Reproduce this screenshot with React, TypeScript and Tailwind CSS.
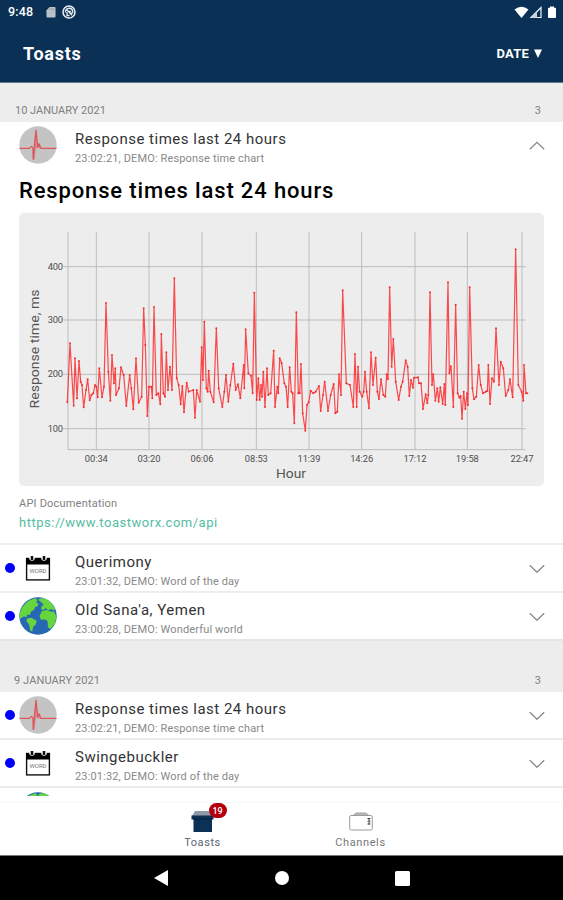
type ToastKind = "pulse" | "word" | "earth";

type Toast = {
  kind: ToastKind;
  meta: string;
  title: string;
};

const SERIES =
  "157,592 165,415 176,602 180,460 186,580 192,468 197,530 201,540 206,607 213,555 218,523 224,586 229,570 235,565 240,540 244,545 248,577 253,490 261,577 267,545 273,294 280,500 286,587 291,450 297,535 301,490 303,570 312,550 318,487 326,510 334,603 344,510 349,550 355,613 363,460 371,593 380,575 386,310 391,420 397,633 402,545 409,545 412,580 417,306 424,570 430,565 436,598 439,387 445,565 450,575 454,442 459,555 465,485 471,555 478,220 485,520 491,540 497,598 502,543 507,622 515,533 521,560 535,555 540,638 545,555 555,590 560,427 564,525 568,350 574,550 578,560 581,497 586,560 596,592 604,370 611,550 622,606 628,560 633,510 640,590 646,540 655,476 662,555 669,538 676,580 686,480 688,550 692,373 700,505 708,512 713,565 718,263 725,585 730,520 734,585 738,540 741,575 745,500 750,606 756,490 760,570 767,565 776,437 780,606 787,545 790,565 794,460 800,475 808,535 813,545 818,606 824,487 829,560 833,565 838,655 844,322 850,565 854,565 858,477 863,625 871,677 876,600 881,592 887,557 895,565 902,560 912,543 917,618 924,570 929,530 939,618 947,570 956,537 961,625 967,620 972,508 978,570 983,256 994,535 1005,540 1015,606 1020,447 1025,606 1029,485 1034,560 1042,575 1046,560 1050,500 1055,560 1062,610 1068,442 1074,540 1082,458 1087,560 1092,582 1098,523 1105,570 1111,575 1115,508 1119,522 1124,247 1130,485 1135,402 1142,530 1151,585 1158,545 1163,530 1172,466 1178,485 1183,573 1188,525 1194,548 1197,518 1209,517 1212,535 1218,535 1224,612 1232,568 1237,595 1240,570 1245,262 1251,540 1255,508 1261,587 1267,550 1271,590 1276,547 1283,597 1288,537 1291,600 1299,232 1303,505 1308,484 1315,606 1322,299 1328,565 1333,578 1337,573 1341,641 1346,560 1351,612 1356,565 1359,600 1364,247 1372,550 1377,583 1384,575 1391,480 1397,540 1404,565 1412,560 1417,558 1420,480 1425,597 1431,520 1437,530 1443,370 1452,540 1457,470 1465,490 1472,573 1480,555 1485,523 1493,577 1502,133 1510,540 1520,560 1525,587 1527,480 1533,565 1537,565";

const POINTS = SERIES.split(" ").map((pair) => pair.split(",").map(Number));

const X_TICKS = [
  { x: 244, label: "00:34" },
  { x: 402, label: "03:20" },
  { x: 561, label: "06:06" },
  { x: 724, label: "08:53" },
  { x: 882, label: "11:39" },
  { x: 1040, label: "14:26" },
  { x: 1200, label: "17:12" },
  { x: 1357, label: "19:58" },
  { x: 1521, label: "22:47" },
];

const Y_TICKS = [
  { y: 185, label: "400" },
  { y: 345, label: "300" },
  { y: 508, label: "200" },
  { y: 671, label: "100" },
];

const RESPONSE: Toast = {
  kind: "pulse",
  title: "Response times last 24 hours",
  meta: "23:02:21, DEMO: Response time chart",
};

const FIRST_DAY: Toast[] = [
  { kind: "word", title: "Querimony", meta: "23:01:32, DEMO: Word of the day" },
  { kind: "earth", title: "Old Sana'a, Yemen", meta: "23:00:28, DEMO: Wonderful world" },
];

const SECOND_DAY: Toast[] = [
  RESPONSE,
  { kind: "word", title: "Swingebuckler", meta: "23:01:32, DEMO: Word of the day" },
];

function PulseIcon() {
  return (
    <svg className="size-[38px]" viewBox="0 0 38 38">
      <circle cx="19" cy="19" r="18.7" fill="#c4c4c4" />
      <path
        d="M.5 22.300H10.500l2-2 1.300 1.500.6 11.500 2.600-29.300L18.800 21l1.200-3 1.800 4.300h15.700"
        fill="none"
        stroke="#dd5559"
        strokeWidth="1.2"
        strokeLinejoin="round"
      />
      <path d="m13.400 33.500 1-12 1.800-15 1.300-2 .8 13.500 2.500-1 1.600 5.300h-5.600l-1.300 11.200Z" fill="#dd5559" opacity=".5" />
    </svg>
  );
}

function WordIcon() {
  return (
    <svg className="size-[38px]" viewBox="0 0 38 38">
      <rect x="7.6" y="9.5" width="22.8" height="21.4" fill="#fff" stroke="#111" strokeWidth="1.4" />
      <path d="M7 9h24v6.500H7z" fill="#000" />
      <circle cx="13" cy="9" r="2.8" fill="#fff" />
      <circle cx="25" cy="9" r="2.8" fill="#fff" />
      <path d="M11.700 7h2.600v4h-2.600zM23.700 7h2.600v4h-2.600z" fill="#111" />
      <text x="19" y="24.2" textAnchor="middle" fontSize="6" fill="#777" textLength="17">
        WORD
      </text>
    </svg>
  );
}

function EarthIcon() {
  return (
    <svg className="size-[38px]" viewBox="0 0 38 38">
      <circle cx="19" cy="19" r="18.7" fill="#2767b4" />
      <g fill="#66d63e">
        <path d="M10 3.500 16.500 1l2 2.500-1.500 2 2.500 1-1 3-2.500.5-1 3-2.800 1.500-1.500 3.500-2.500-.5-.7 2.500-3-.5L1 22 .3 17 3 10.500l4-4.500Z" />
        <path d="m8 21.500 4.500-.8 5.300 3.300-1.300 3.700-2.500 2.300-.7 4.500-2-1-1.300-6.500-2.500-2.500Z" />
        <path d="m19 2.500 4-1.500 5 1.600 5 4 3 5-1 2-3-1.500-2.500 1.500-3-2.500-2 2-2.500-.8.5-3.300 2.500-1-2.500-2.500Z" />
        <path d="m23 14 5-1 3 1.500h4l2.500 5-1.500 7-4.500 5.500-2.500-1.500-.5-6.500-2.500-1.500-4 .3L20.500 19Z" />
      </g>
    </svg>
  );
}

function ToastIcon({ kind }: { kind: ToastKind }) {
  if (kind === "pulse") return <PulseIcon />;
  if (kind === "word") return <WordIcon />;
  return <EarthIcon />;
}

function Chevron({ up = false }: { up?: boolean }) {
  return (
    <svg className="h-[9px] w-4" viewBox="0 0 16 9">
      <path
        d={up ? "M.8 8.300 8 1.300 15.200 8.300" : "M.8 1.300 8 8.300 15.200 1.300"}
        fill="none"
        stroke="#858585"
        strokeWidth="1.2"
      />
    </svg>
  );
}

function ToastRow({ toast, open = false }: { toast: Toast; open?: boolean }) {
  return (
    <div className="flex h-[46px] shrink-0 items-center bg-white pr-[18px] pl-[5px]">
      <span className={open ? "size-[10px]" : "size-[10px] rounded-full bg-[#0000fa]"} />
      <span className="ml-1">
        <ToastIcon kind={toast.kind} />
      </span>
      <div className="ml-[18px] flex-1 pt-[7px] whitespace-nowrap">
        <div className="text-[15px] leading-[19px] tracking-[0.5px] text-[#333]">{toast.title}</div>
        <div className="mt-px text-[11px] leading-[17px] tracking-[0.14px] text-[#888]">{toast.meta}</div>
      </div>
      <Chevron up={open} />
    </div>
  );
}

function SectionHeader({ date, className }: { date: string; className: string }) {
  return (
    <div
      className={`flex shrink-0 items-end justify-between bg-[#ededed] pr-[22px] text-[11px] leading-[14px] text-[#808080] ${className}`}
    >
      <span>{date}</span>
      <span>3</span>
    </div>
  );
}

function ResponseChart() {
  return (
    <svg className="block h-[273px] w-[525px] rounded-[5px] bg-[#ededed]" viewBox="12 24 1575 819">
      <g stroke="#bdbdbd" strokeWidth="3">
        <path d="M159 81V734" />
        {X_TICKS.map((tick) => (
          <path key={tick.label} d={`M${tick.x} 81V734`} />
        ))}
        {Y_TICKS.map((tick) => (
          <path key={tick.label} d={`M144 ${tick.y}H1532`} />
        ))}
        <path d="M159 734H1532" />
      </g>
      <polyline points={SERIES} fill="none" stroke="#fb2a2e" strokeWidth="3.6" strokeLinejoin="round" opacity=".85" />
      <g fill="#f5161b" opacity=".75">
        {POINTS.map(([x, y]) => (
          <circle key={x} cx={x} cy={y} r="3" />
        ))}
      </g>
      <g fill="#4d4d4d" fontSize="28">
        {X_TICKS.map((tick) => (
          <text key={tick.label} x={tick.x} y="771" textAnchor="middle" textLength="69">
            {tick.label}
          </text>
        ))}
        {Y_TICKS.map((tick) => (
          <text key={tick.label} x="144" y={tick.y + 9} textAnchor="end" textLength="46">
            {tick.label}
          </text>
        ))}
      </g>
      <text x="828" y="819" textAnchor="middle" fontSize="39" textLength="90" lengthAdjust="spacingAndGlyphs" fill="#555">
        Hour
      </text>
      <text
        transform="translate(72 432) rotate(-90)"
        textAnchor="middle"
        fontSize="38"
        textLength="357"
        lengthAdjust="spacingAndGlyphs"
        fill="#555"
      >
        Response time, ms
      </text>
    </svg>
  );
}

function StatusBar() {
  return (
    <div className="flex h-6 items-center pr-[6px] pl-2 text-white">
      <span className="w-[27px] text-[12.5px] leading-4 font-medium tracking-[0.2px]">9:48</span>
      <svg className="ml-[11px] h-3 w-[10px]" viewBox="0 0 11 12">
        <path d="M4 .5h5.500q1 0 1 1V11q0 1-1 1H1.500q-1 0-1-1V4Z" fill="#b9c0c6" />
        <path d="M4.500 2v2M6.500 2v2M8.500 2v2" stroke="#7b8d9d" strokeWidth=".8" />
      </svg>
      <svg className="ml-[6px] size-[14px]" viewBox="0 0 14 14">
        <circle cx="7" cy="7" r="6" fill="none" stroke="#e5e9ed" strokeWidth="1.6" />
        <path
          d="M3.500 7.500q-.5-3.500 3-4.200 3.500-.5 4.200 2.700.3 2-1.500 2.400M4.500 4.500l5.500 5.800M5 7v3.500h2.500M6 6.500h3"
          fill="none"
          stroke="#e5e9ed"
          strokeWidth="1.3"
        />
      </svg>
      <svg className="ml-auto h-[13px] w-[43px]" viewBox="0 0 43 13">
        <path d="M.5 3.500Q7.500-2 14.500 3.500L7.500 12Z" fill="#fff" />
        <path d="M17 11.500 27 1.500v10Z" fill="none" stroke="#f2f4f6" strokeWidth="1.2" />
        <path d="M17 12 23 6v6Z" fill="#c9d1d9" />
        <path d="M36 .5h4v1.200h1q1 0 1 1V11q0 1-1 1h-6q-1 0-1-1V2.700q0-1 1-1h1Z" fill="#fff" />
      </svg>
    </div>
  );
}

function TabBar() {
  return (
    <div className="flex h-[53px] shrink-0 justify-center border-t border-[#f7f7f7] bg-white text-[11px] leading-[14px] text-[#777]">
      <div className="relative flex w-[158px] flex-col items-center">
        <svg className="mt-[8px] h-[22px] w-[24px]" viewBox="0 0 24 22">
          <path d="M4 0h16l3 5H1Z" fill="#8f99a9" />
          <path d="M.5 4.500h22v4H21V21H2.500V8.500h-2Z" fill="#0b3157" />
          <path d="M2.500 8H21" stroke="#06213f" />
        </svg>
        <span className="mt-[3px] tracking-[0.55px] text-[#5b6673]">Toasts</span>
        <span className="absolute top-0 left-[85px] flex h-[15px] w-[18px] items-center justify-center rounded-full bg-[#b3000f] text-[9px] font-medium text-white">
          19
        </span>
      </div>
      <div className="flex w-[158px] flex-col items-center">
        <svg className="mt-[8px] h-[22px] w-[24px]" viewBox="0 0 24 22">
          <path d="M4 4.500 7 2h10L20 4.500Z" fill="#bbb" stroke="#888" strokeWidth=".7" />
          <rect x=".7" y="4.5" width="22.6" height="14.5" rx="1.5" fill="#fff" stroke="#999" />
          <path d="M18.500 7.500h3M20 7.500V10M18.500 10.200h3M20 11v2.500M18.500 13h3" stroke="#444" />
        </svg>
        <span className="mt-[3px] tracking-[0.6px]">Channels</span>
      </div>
    </div>
  );
}

function SystemNav() {
  return (
    <div className="flex h-[45px] shrink-0 items-center justify-center gap-[106px] border-t border-[#777] bg-black">
      <svg className="h-4 w-[15px]" viewBox="0 0 15 16">
        <path d="M0 8 14 0v16Z" fill="#fff" />
      </svg>
      <span className="size-[14px] rounded-full bg-white" />
      <span className="size-[15px] rounded-[1.5px] bg-white" />
    </div>
  );
}

export default function App() {
  return (
    <div className="flex h-[900px] w-[563px] flex-col overflow-hidden bg-white font-['Roboto',sans-serif]">
      <header className="h-[83px] shrink-0 border-b border-[#62788f] bg-[#0a3055] text-white">
        <StatusBar />
        <div className="flex h-[59px] items-center justify-between pr-[20px] pl-[23px]">
          <h1 className="text-[18px] font-bold tracking-[0.75px]">Toasts</h1>
          <div className="flex items-center gap-[4px] text-[13px] font-bold tracking-[0.2px]">
            DATE
            <svg className="h-[9px] w-[10px]" viewBox="0 0 10 9">
              <path d="M1 .5h8L5 9Z" fill="#fff" />
            </svg>
          </div>
        </div>
      </header>

      <main className="flex h-[719px] shrink-0 flex-col overflow-hidden">
        <SectionHeader className="h-[39px] pb-[4px] pl-[15px]" date="10 JANUARY 2021" />
        <section className="flex h-[421px] shrink-0 flex-col">
          <ToastRow toast={RESPONSE} open />
          <h2 className="mt-[9px] pl-[19px] text-[22px] leading-7 font-medium tracking-[0.85px] whitespace-nowrap text-black">
            Response times last 24 hours
          </h2>
          <div className="mt-[8px] px-[19px]">
            <ResponseChart />
            <div className="mt-[11px] text-[11px] leading-[14px] tracking-[0.2px] text-[#808080]">API Documentation</div>
            <div className="mt-[3px] text-[13px] leading-[18px] tracking-[0.52px] text-[#55bda2]">
              https://www.toastworx.com/api
            </div>
          </div>
        </section>
        <div className="flex shrink-0 flex-col">
          {FIRST_DAY.map((toast) => (
            <div key={toast.title} className="border-t-2 border-[#ececec]">
              <ToastRow toast={toast} />
            </div>
          ))}
        </div>
        <SectionHeader
          className="h-[53px] border-t-2 border-[#e5e5e5] pb-[4px] pl-[14px] tracking-[0.1px]"
          date="9 JANUARY 2021"
        />
        {SECOND_DAY.map((toast) => (
          <div key={toast.title} className="border-b-2 border-[#ececec]">
            <ToastRow toast={toast} />
          </div>
        ))}
        <div className="h-[8px] shrink-0 overflow-hidden pt-[4px] pl-[19px]">
          <EarthIcon />
        </div>
      </main>

      <TabBar />
      <SystemNav />
    </div>
  );
}
